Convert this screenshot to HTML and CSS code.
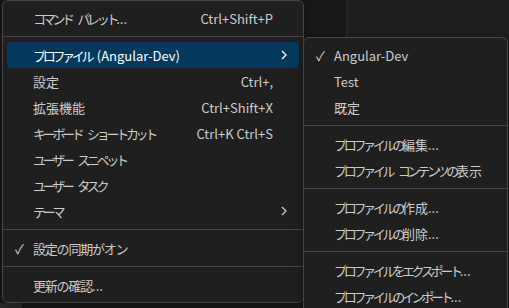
FILE: index.html
```html
<!DOCTYPE html>
<html lang="ja">

<head>
    <meta charset="UTF-8">
    <title>メニュー</title>
    <link rel="stylesheet" href="styles.css">
</head>

<body>
    <div class="workbench">
        <div class="sidebar"></div>
        <div class="editor"></div>
        <div class="statusbar">
            <span class="status-icon"></span>
        </div>
    </div>

    <div class="menu main-menu">
        <div class="menu-item"><span class="label"><span class="kana">コマンド パレット</span>...</span><span class="keys">Ctrl+Shift+P</span></div>
        <div class="separator"></div>
        <div class="menu-item active"><span class="label"><span class="kana">プロファイル </span>(Angular-Dev)</span>
            <svg class="chevron" width="16" height="16" viewBox="0 0 16 16"><polyline points="6,4 10,8 6,12" fill="none" stroke="currentColor" stroke-width="1.3"/></svg>
        </div>
        <div class="menu-item"><span class="label">設定</span><span class="keys">Ctrl+,</span></div>
        <div class="menu-item"><span class="label">拡張機能</span><span class="keys">Ctrl+Shift+X</span></div>
        <div class="menu-item"><span class="label kana">キーボード ショートカット</span><span class="keys">Ctrl+K Ctrl+S</span></div>
        <div class="menu-item"><span class="label kana">ユーザー スニペット</span></div>
        <div class="menu-item"><span class="label kana">ユーザー タスク</span></div>
        <div class="menu-item"><span class="label kana">テーマ</span>
            <svg class="chevron" width="16" height="16" viewBox="0 0 16 16"><polyline points="6,4 10,8 6,12" fill="none" stroke="currentColor" stroke-width="1.3"/></svg>
        </div>
        <div class="separator"></div>
        <div class="menu-item"><span class="check">&#10003;</span><span class="label mixed">設定の同期がオン</span></div>
        <div class="separator"></div>
        <div class="menu-item"><span class="label"><span class="mixed">更新の確認</span>...</span></div>
    </div>

    <div class="menu sub-menu">
        <div class="menu-item"><span class="check">&#10003;</span><span class="label">Angular-Dev</span></div>
        <div class="menu-item"><span class="label">Test</span></div>
        <div class="menu-item"><span class="label">既定</span></div>
        <div class="separator"></div>
        <div class="menu-item"><span class="label"><span class="kana">プロファイルの</span>編集...</span></div>
        <div class="menu-item"><span class="label"><span class="kana">プロファイル コンテンツの</span>表示</span></div>
        <div class="separator"></div>
        <div class="menu-item"><span class="label"><span class="kana">プロファイルの</span>作成...</span></div>
        <div class="menu-item"><span class="label"><span class="kana">プロファイルの</span>削除...</span></div>
        <div class="separator"></div>
        <div class="menu-item"><span class="label"><span class="kana">プロファイルをエクスポート</span>...</span></div>
        <div class="menu-item"><span class="label"><span class="kana">プロファイルのインポート</span>...</span></div>
    </div>
</body>

</html>
```

FILE: styles.css
```css
html,
body {
    margin: 0;
    padding: 0;
    width: 509px;
    height: 308px;
    overflow: hidden;
    background-color: #181818;
    font-family: "Noto Sans CJK JP", sans-serif;
    font-size: 13px;
    color: #cccccc;
}

.workbench {
    display: grid;
    grid-template-columns: 347px 1fr;
    grid-template-rows: 303px 1fr;
    height: 100%;
}

.sidebar {
    background-color: #181818;
    border-right: 1px solid #2b2b2b;
}

.editor {
    background-color: #1f1f1f;
}

.statusbar {
    grid-column: 1 / 3;
    display: flex;
    background-color: #181818;
}

.status-icon {
    width: 22px;
    background-color: #2b2b2b;
}

/* menus lie over the workbench */
.menu {
    position: absolute;
    box-sizing: border-box;
    padding: 4px 0;
    background-color: #1f1f1f;
    border: 1px solid #454545;
    border-radius: 6px;
    box-shadow: 0 2px 8px rgba(0, 0, 0, 0.36);
}

.main-menu {
    left: 2px;
    top: 0;
    width: 302px;
}

.sub-menu {
    left: 303px;
    top: 37px;
    width: 205px;
    height: 290px;
    z-index: 2;
}

.menu-item {
    position: relative;
    display: flex;
    align-items: center;
    height: 26px;
    margin: 0 4px;
    padding: 0 26px;
    border-radius: 4px;
    white-space: nowrap;
}

.menu-item.active {
    background-color: #04395e;
    color: #ffffff;
}

.label {
    flex: 1;
}

/* kana in the UI font are narrower than in Noto CJK */
.kana {
    letter-spacing: -3.3px;
    word-spacing: 6px;
}

.mixed {
    letter-spacing: -1.2px;
}

.keys {
    margin-left: 20px;
}

.check {
    position: absolute;
    left: 8px;
    font-size: 13px;
    color: #cccccc;
}

.chevron {
    position: absolute;
    right: 7px;
    top: 5px;
}

.separator {
    height: 1px;
    margin: 5px 0;
    background-color: #454545;
}
```
